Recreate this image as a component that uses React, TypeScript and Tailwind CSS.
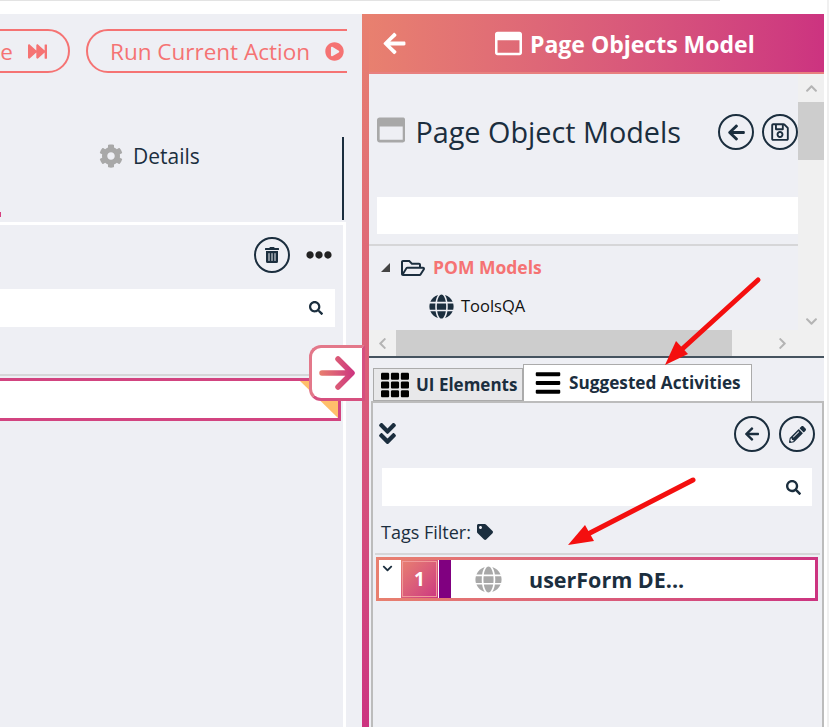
import React from 'react';
import {
  FaAngleDoubleDown,
  FaArrowLeft,
  FaBars,
  FaChevronDown,
  FaChevronLeft,
  FaChevronRight,
  FaChevronUp,
  FaCog,
  FaEllipsisH,
  FaFastForward,
  FaGlobe,
  FaPencilAlt,
  FaPlayCircle,
  FaRegFolderOpen,
  FaRegSave,
  FaRegWindowMaximize,
  FaSearch,
  FaTag,
  FaTh,
  FaTrashAlt,
} from 'react-icons/fa';

const font = { fontFamily: '"Open Sans", "Noto Sans", sans-serif' };

const CircleButton: React.FC<{ children: React.ReactNode; className?: string }> = ({ children, className = '' }) => (
  <div className={`w-9 h-9 shrink-0 rounded-full border-2 border-[#1b2e3e] flex items-center justify-center text-[#1b2e3e] ${className}`}>
    {children}
  </div>
);

const LeftPanel: React.FC = () => (
  <div className="w-[362px] shrink-0 bg-[#eeeff4]">
    {/* run toolbar */}
    <div className="w-[347px] pt-[15px] overflow-hidden">
      <div className="flex gap-4 ml-[-130px] w-[600px]">
        <div className="w-[200px] h-11 shrink-0 rounded-full border-2 border-[#f57373] flex items-center justify-end pr-[21px] gap-[15px] text-[#f57373] text-[22.5px] whitespace-nowrap">
          <span className="pt-0.5">Continue</span>
          <FaFastForward size={19} />
        </div>
        <div className="w-[300px] h-11 shrink-0 rounded-l-full border-2 border-[#f57373] flex items-center pl-[22px] text-[#f57373] text-[22.5px] whitespace-nowrap">
          <span className="pt-0.5">Run Current Action</span>
          <FaPlayCircle size={19} className="ml-[15px]" />
        </div>
      </div>
    </div>

    {/* details tab */}
    <div className="relative pt-16 h-[149px]">
      <div className="w-[344px] h-[83px] border-r-2 border-[#1b2e3e] flex items-start pt-1 pl-[99px] gap-[10px]">
        <FaCog size={24} className="text-[#a8a8a8] mt-[3px]" />
        <span className="text-[21px] text-[#1b2e3e]">Details</span>
      </div>
      <div className="absolute left-0 top-[139px] w-px h-[5px] bg-[#d6407f]" />
    </div>

    {/* activity list */}
    <div className="w-[346px] h-[505px] border-t-[3px] border-r-[3px] border-white">
      <div className="flex items-center justify-end pt-3 pr-[11px] gap-4">
        <CircleButton>
          <FaTrashAlt size={16} />
        </CircleButton>
        <FaEllipsisH size={26} className="text-[#222]" />
      </div>
      <div className="mt-4 w-[335px] h-[38px] bg-white flex items-center justify-end pr-3">
        <FaSearch size={14} className="text-[#1b2e3e]" />
      </div>
      <div className="mt-[47px] w-[343px] h-0.5 bg-[#d6d6d8]" />
      <div className="mt-0.5 relative w-[341px] h-[43px] bg-white border-[3px] border-l-0 border-[#d24480]">
        <div className="absolute right-0 top-0 w-[38px] h-[37px] bg-[#ffbf6b] [clip-path:polygon(0_0,100%_0,100%_100%)]" />
      </div>
    </div>
  </div>
);

const PomSection: React.FC = () => (
  <div className="relative h-[282px] bg-[#eeeff4]">
    <div className="flex h-[256px]">
      <div className="w-[429px] shrink-0">
        <div className="flex items-start pl-2 pt-10 h-[123px]">
          <FaRegWindowMaximize size={30} className="text-[#a8a8a8] mt-px" />
          <span className="ml-[10px] text-[28.8px] leading-[36px] text-[#1b2e3e] whitespace-nowrap">Page Object Models</span>
          <CircleButton className="ml-[37px]">
            <FaArrowLeft size={19} />
          </CircleButton>
          <CircleButton className="ml-2">
            <FaRegSave size={20} />
          </CircleButton>
        </div>
        <div className="ml-2 h-[37px] w-[421px] bg-white" />
        <div className="mt-[10px] h-0.5 bg-[#d6d6d8]" />
        <div className="flex items-center h-[43px] pl-3">
          <div className="w-[9px] h-[9px] bg-[#444] [clip-path:polygon(100%_0,100%_100%,0_100%)]" />
          <FaRegFolderOpen size={24} className="ml-[11px] text-[#1b2e3e]" />
          <span className="ml-2 text-[17.5px] font-bold text-[#f57373] whitespace-nowrap">POM Models</span>
        </div>
        <div className="flex items-center pl-[60px] h-[34px]">
          <FaGlobe size={25} className="text-[#1b2e3e]" />
          <span className="ml-[7px] text-[16.5px] text-[#111]">ToolsQA</span>
        </div>
      </div>
      {/* vertical scrollbar */}
      <div className="w-[26px] bg-[#f0f0f0] flex flex-col items-center">
        <div className="h-7 flex items-center justify-center">
          <FaChevronUp size={13} className="text-[#b4b4b4]" />
        </div>
        <div className="w-full h-[58px] bg-[#cdcdcd]" />
        <div className="mt-[152px] h-[18px] flex items-center justify-center">
          <FaChevronDown size={13} className="text-[#b4b4b4]" />
        </div>
      </div>
    </div>
    {/* horizontal scrollbar */}
    <div className="flex items-center h-[26px] bg-[#f0f0f0]">
      <div className="w-[27px] flex justify-center">
        <FaChevronLeft size={13} className="text-[#b4b4b4]" />
      </div>
      <div className="w-[336px] h-full bg-[#cdcdcd]" />
      <div className="ml-[37px] w-[27px] flex justify-center">
        <FaChevronRight size={13} className="text-[#b4b4b4]" />
      </div>
    </div>
  </div>
);

const SuggestedSection: React.FC = () => (
  <div className="flex-1 flex flex-col min-h-0">
    {/* tabs */}
    <div className="flex items-end h-[45px] pl-1 border-t-2 border-[#45535f]">
      <div className="w-[150px] h-[33px] bg-[#e8e8ea] border border-[#ababab] flex items-center pl-[7px] gap-[7px]">
        <FaTh size={28} className="text-black" />
        <span className="text-[17px] font-bold text-[#1b2e3e] whitespace-nowrap">UI Elements</span>
      </div>
      <div className="w-[229px] h-[37px] bg-white border border-b-0 border-[#ababab] flex items-center pl-[10px] gap-[7px]">
        <FaBars size={28} className="text-black" />
        <span className="text-[17.2px] font-bold text-[#1b2e3e] whitespace-nowrap">Suggested Activities</span>
      </div>
    </div>
    <div className="flex-1 ml-0.5 border-2 border-[#bcbcbc] border-b-0 bg-[#eeeff4]">
      <div className="flex items-start pt-[13px] pl-px pr-[7px] h-[65px]">
        <FaAngleDoubleDown size={27} className="text-[#1b2e3e] mt-[4px]" />
        <CircleButton className="ml-auto">
          <FaArrowLeft size={16} />
        </CircleButton>
        <CircleButton className="ml-[9px]">
          <FaPencilAlt size={17} />
        </CircleButton>
      </div>
      <div className="ml-[9px] w-[430px] h-[38px] bg-white flex items-center justify-end pr-[11px]">
        <FaSearch size={15} className="text-[#1b2e3e]" />
      </div>
      <div className="flex items-center mt-[14px] ml-[8px] h-[24px] gap-[6px]">
        <span className="text-[18px] text-[#1b2e3e] whitespace-nowrap">Tags Filter:</span>
        <FaTag size={16} className="text-[#1b2e3e]" />
      </div>
      <div className="mt-[9px] mx-[2px] h-0.5 bg-[#d6d6d8]" />
      <div className="mt-0.5 ml-[3px] w-[442px] h-[44px] p-[3px] bg-gradient-to-r from-[#e8806f] to-[#cc3380]">
        <div className="h-full bg-white flex items-stretch">
          <div className="w-[22px] flex justify-start pl-[3px] pt-[3px]">
            <FaChevronDown size={11} className="text-[#1b2e3e]" />
          </div>
          <div className="w-[37px] bg-gradient-to-br from-[#e8806f] to-[#cc3380] outline outline-1 -outline-offset-2 outline-[#f09a9a] flex items-center justify-center text-white font-bold text-[19px]">
            1
          </div>
          <div className="ml-px w-[12px] bg-[#800080]" />
          <FaGlobe size={27} className="text-[#a8a8a8] ml-[24px] self-center" />
          <span className="ml-[27px] self-center pt-0.5 text-[21.5px] font-bold text-[#1b2e3e] whitespace-nowrap">userForm DE...</span>
        </div>
      </div>
    </div>
  </div>
);

const App: React.FC = () => (
  <div className="relative w-[829px] h-[727px] overflow-hidden bg-white flex flex-col border-r-2 border-[#f0f0f0]" style={font}>
    <div className="h-[14px] shrink-0">
      <div className="w-[720px] h-px bg-[#e3e3e3]" />
    </div>
    <div className="flex flex-1 min-h-0">
      <LeftPanel />
      <div className="w-[7px] shrink-0 bg-gradient-to-b from-[#e8806f] to-[#cc3380]" />
      <div className="w-[455px] shrink-0 flex flex-col bg-[#eeeff4]">
        <div className="h-[60px] shrink-0 flex items-center bg-gradient-to-r from-[#e8806f] to-[#cc3380] border-b-2 border-[#e8807f] pl-[13px]">
          <FaArrowLeft size={25} className="text-white" />
          <FaRegWindowMaximize size={27} className="ml-[88px] text-white" />
          <span className="ml-2 pt-0.5 text-[23px] font-bold text-white whitespace-nowrap">Page Objects Model</span>
        </div>
        <PomSection />
        <SuggestedSection />
      </div>
    </div>

    {/* collapse button sitting over the splitter */}
    <div className="absolute left-[309px] top-[345px] w-[56px] h-[56px] bg-white rounded-l-xl border-[3px] border-t-[#e3788a] border-l-[#e3788a] border-b-[#d6507f] border-r-[#d6507f] flex items-center justify-center">
      <svg width="36" height="34" viewBox="0 0 36 34" fill="none">
        <defs>
          <linearGradient id="arrowFill" x1="0" y1="0" x2="36" y2="0" gradientUnits="userSpaceOnUse">
            <stop offset="0" stopColor="#e8806f" />
            <stop offset="1" stopColor="#cc3380" />
          </linearGradient>
        </defs>
        <path d="M3 17H32M19 3L33 17L19 31" stroke="url(#arrowFill)" strokeWidth="5.5" strokeLinecap="round" strokeLinejoin="round" />
      </svg>
    </div>

    {/* red annotation arrows */}
    <svg className="absolute left-0 top-0 pointer-events-none" width="829" height="727" viewBox="0 0 829 727" fill="none">
      <path d="M758 280L680 351" stroke="#f40f0f" strokeWidth="5" strokeLinecap="round" />
      <path d="M665 365L676 341L688 354Z" fill="#f40f0f" />
      <path d="M693 480L588 534" stroke="#f40f0f" strokeWidth="5" strokeLinecap="round" />
      <path d="M568 545L585 525L594 541Z" fill="#f40f0f" />
    </svg>
  </div>
);

export default App;
